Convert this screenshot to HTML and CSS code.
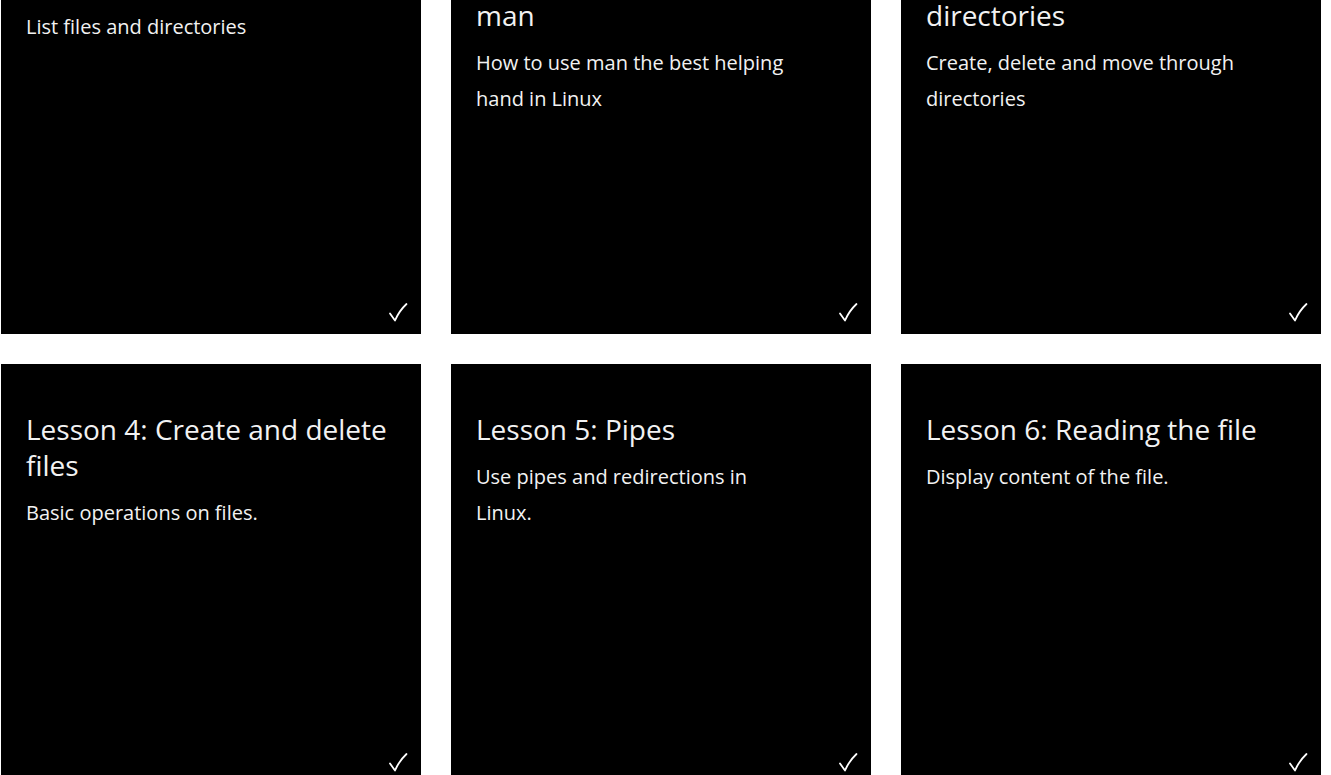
FILE: index.html
```html
<!DOCTYPE html>
<html lang="en">
<head>
<meta charset="utf-8">
<title>Lessons</title>
<link rel="stylesheet" href="styles.css">
</head>
<body>
<main class="lessons">
  <article class="card">
    <h2 class="card-title">Lesson 1: ls</h2>
    <p class="card-desc">List files and directories</p>
    <svg class="card-check" viewBox="0 0 20 20" width="20" height="20" aria-hidden="true"><path d="M2 11.5 L7 18.5 Q11 9 18.5 2" fill="none" stroke="#ffffff" stroke-width="1.8" stroke-linecap="round" stroke-linejoin="round"/></svg>
  </article>
  <article class="card">
    <h2 class="card-title">Lesson 2: Getting help with man</h2>
    <p class="card-desc">How to use man the best helping hand in Linux</p>
    <svg class="card-check" viewBox="0 0 20 20" width="20" height="20" aria-hidden="true"><path d="M2 11.5 L7 18.5 Q11 9 18.5 2" fill="none" stroke="#ffffff" stroke-width="1.8" stroke-linecap="round" stroke-linejoin="round"/></svg>
  </article>
  <article class="card">
    <h2 class="card-title">Lesson 3: Working with directories</h2>
    <p class="card-desc">Create, delete and move through directories</p>
    <svg class="card-check" viewBox="0 0 20 20" width="20" height="20" aria-hidden="true"><path d="M2 11.5 L7 18.5 Q11 9 18.5 2" fill="none" stroke="#ffffff" stroke-width="1.8" stroke-linecap="round" stroke-linejoin="round"/></svg>
  </article>
  <article class="card">
    <h2 class="card-title">Lesson 4: Create and delete files</h2>
    <p class="card-desc">Basic operations on files.</p>
    <svg class="card-check" viewBox="0 0 20 20" width="20" height="20" aria-hidden="true"><path d="M2 11.5 L7 18.5 Q11 9 18.5 2" fill="none" stroke="#ffffff" stroke-width="1.8" stroke-linecap="round" stroke-linejoin="round"/></svg>
  </article>
  <article class="card">
    <h2 class="card-title">Lesson 5: Pipes</h2>
    <p class="card-desc">Use pipes and redirections in Linux.</p>
    <svg class="card-check" viewBox="0 0 20 20" width="20" height="20" aria-hidden="true"><path d="M2 11.5 L7 18.5 Q11 9 18.5 2" fill="none" stroke="#ffffff" stroke-width="1.8" stroke-linecap="round" stroke-linejoin="round"/></svg>
  </article>
  <article class="card">
    <h2 class="card-title">Lesson 6: Reading the file</h2>
    <p class="card-desc">Display content of the file.</p>
    <svg class="card-check" viewBox="0 0 20 20" width="20" height="20" aria-hidden="true"><path d="M2 11.5 L7 18.5 Q11 9 18.5 2" fill="none" stroke="#ffffff" stroke-width="1.8" stroke-linecap="round" stroke-linejoin="round"/></svg>
  </article>
</main>
</body>
</html>
```
FILE: styles.css
```css
html, body {
  margin: 0;
  padding: 0;
  background: #ffffff;
}
body {
  font-family: "Open Sans", "Noto Sans", sans-serif;
  overflow: hidden;
}
.lessons {
  display: grid;
  grid-template-columns: repeat(3, 420px);
  gap: 30px;
  margin: -86px 0 0 1px;
}
.card {
  background: #000000;
  color: #f2f2f2;
  height: 420px;
  box-sizing: border-box;
  padding: 47px 25px 12px 25px;
  display: flex;
  flex-direction: column;
}
.card-title {
  margin: 0 0 12px 0;
  font-size: 28px;
  line-height: 36px;
  font-weight: 400;
}
.card-desc {
  margin: 0;
  max-width: 322px;
  font-size: 20px;
  line-height: 36px;
  font-weight: 400;
}
.card-check {
  margin-top: auto;
  align-self: flex-end;
  margin-right: -12px;
  display: block;
}
```
